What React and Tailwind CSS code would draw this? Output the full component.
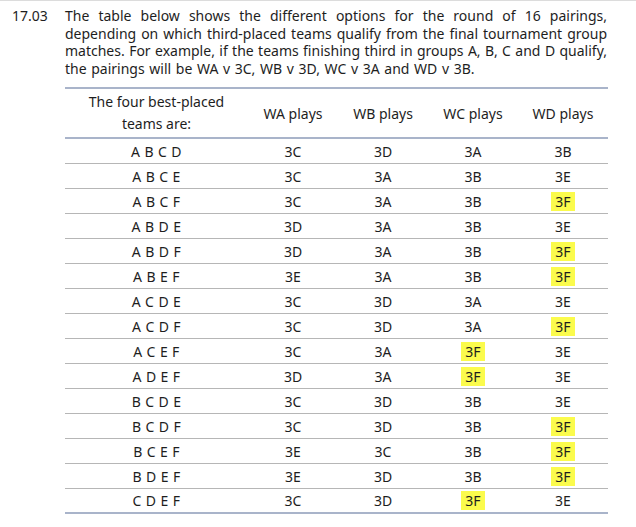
const rows = [
  ['A B C D', '3C', '3D', '3A', '3B'],
  ['A B C E', '3C', '3A', '3B', '3E'],
  ['A B C F', '3C', '3A', '3B', '3F'],
  ['A B D E', '3D', '3A', '3B', '3E'],
  ['A B D F', '3D', '3A', '3B', '3F'],
  ['A B E F', '3E', '3A', '3B', '3F'],
  ['A C D E', '3C', '3D', '3A', '3E'],
  ['A C D F', '3C', '3D', '3A', '3F'],
  ['A C E F', '3C', '3A', '3F', '3E'],
  ['A D E F', '3D', '3A', '3F', '3E'],
  ['B C D E', '3C', '3D', '3B', '3E'],
  ['B C D F', '3C', '3D', '3B', '3F'],
  ['B C E F', '3E', '3C', '3B', '3F'],
  ['B D E F', '3E', '3D', '3B', '3F'],
  ['C D E F', '3C', '3D', '3F', '3E'],
]

function Cell({ value }) {
  if (value === '3F') {
    return <span className="bg-[#fbfb4c] px-[4px] leading-[19px] inline-block">{value}</span>
  }
  return <span>{value}</span>
}

export default function App() {
  return (
    <div className="w-[636px] h-[527px] bg-white border-t border-[#dcdcdc] text-[#1e1e1e] text-[14px] font-['Noto_Sans','Open_Sans',sans-serif] overflow-hidden">
      <div className="flex pt-[6px]">
        <div className="w-[65px] pl-[12px] leading-[17.5px]">17.03</div>
        <div className="w-[542px] leading-[17.5px] whitespace-nowrap">
          <div className="text-justify [text-align-last:justify]">The table below shows the different options for the round of 16 pairings,</div>
          <div className="text-justify [text-align-last:justify]">depending on which third-placed teams qualify from the final tournament group</div>
          <div className="text-justify [text-align-last:justify]">matches. For example, if the teams finishing third in groups A, B, C and D qualify,</div>
          <div className="[word-spacing:1px]">the pairings will be WA v 3C, WB v 3D, WC v 3A and WD v 3B.</div>
        </div>
      </div>

      <div className="ml-[65px] mt-[10px] w-[543px]">
        <div className="grid grid-cols-[183px_90px_90px_90px_90px] h-[52px] border-y-2 border-[#a9b4ca] items-center text-center">
          <div className="leading-[22px]">
            The four best-placed
            <br />
            teams are:
          </div>
          <div>WA plays</div>
          <div>WB plays</div>
          <div>WC plays</div>
          <div>WD plays</div>
        </div>
        {rows.map((r, i) => (
          <div
            key={r[0]}
            className={
              'grid grid-cols-[183px_90px_90px_90px_90px] h-[25px] items-center text-center ' +
              (i === rows.length - 1 ? 'border-b-2 border-[#a9b4ca]' : 'border-b border-[#b6b6b6]')
            }
          >
            <div className="tracking-[0.4px]">{r[0]}</div>
            <div><Cell value={r[1]} /></div>
            <div><Cell value={r[2]} /></div>
            <div><Cell value={r[3]} /></div>
            <div><Cell value={r[4]} /></div>
          </div>
        ))}
      </div>
    </div>
  )
}
